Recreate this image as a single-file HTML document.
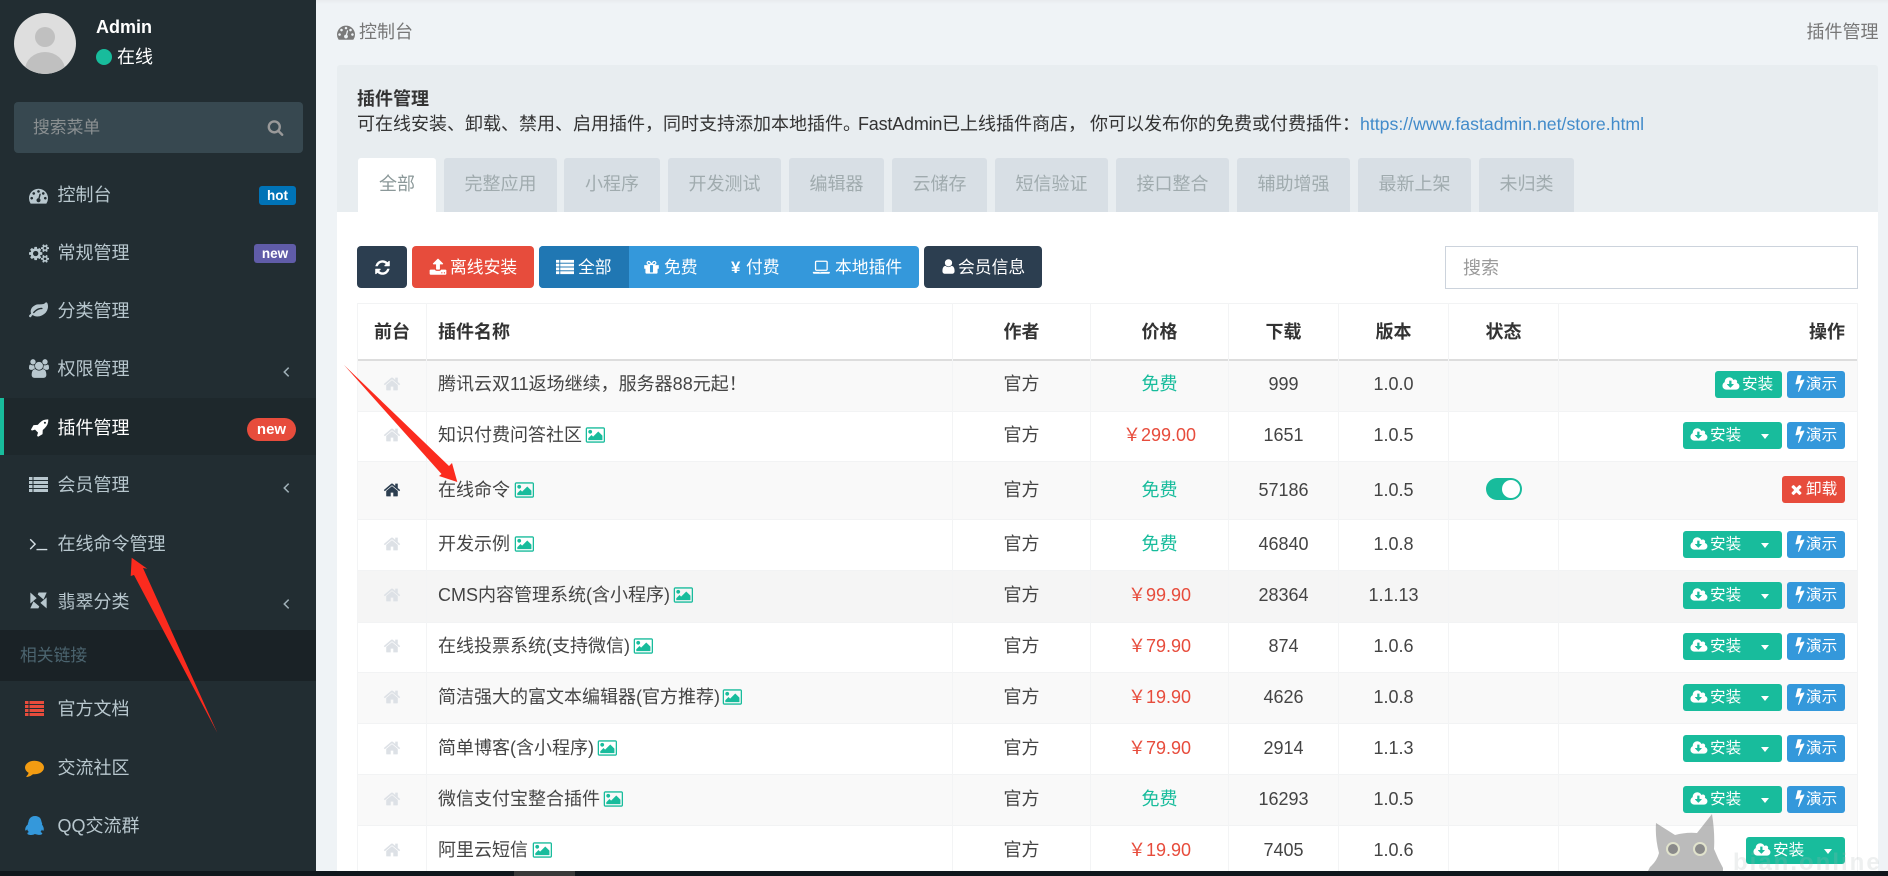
<!DOCTYPE html>
<html lang="zh"><head><meta charset="utf-8"><title>插件管理</title>
<style>
html,body{margin:0;padding:0;width:1888px;height:876px;overflow:hidden;background:#eff3f6}
body{position:relative;font-family:"Liberation Sans","Noto Sans CJK SC",sans-serif;font-size:18px;color:#444}
div,span,svg,a{position:absolute;box-sizing:border-box}
.t{white-space:nowrap;line-height:24px;height:24px}
svg{fill:currentColor;overflow:visible}
#side{left:0;top:0;width:316px;height:871px;background:#222d32}
.m{left:57.5px;color:#b8c7ce}
.ic{color:#b8c7ce}
.bd{color:#fff;font-weight:bold;text-align:center;border-radius:3px;font-size:13.5px;line-height:19px;height:19px}
.tab{top:158px;height:54px;background:#d8dfe5;border-radius:3px 3px 0 0;text-align:center;line-height:52px;color:#a0abae}
.tb{top:246px;height:42px;border-radius:4px}
.w{color:#fff;font-size:16.8px;top:256px}
.rb{left:357px;width:1501px;border-bottom:1px solid #f2f3f4}
.vl{top:303px;width:1px;height:568px;background:#f3f4f5}
.h{left:383px;top:3px;width:18px;height:18px;color:#dde1e6}
.a,.p,.d,.v{text-align:center}
.a{left:953px;width:137px}.p{left:1091px;width:137px;color:#e74c3c}.f{color:#18bc9c}.d{left:1229px;width:109px}.v{left:1339px;width:109px}
.n{left:438px}
.im{width:20px;height:18px;color:#18bc9c}
.btn{height:27px;border-radius:3px;color:#fff}
.g{background:#18bc9c}.bl{background:#3498db}
.l{font-size:15.6px;line-height:28px;white-space:nowrap}
.cd{width:17px;height:16px;top:5px;color:#fff}
.bt{width:10px;height:16px;top:5px;color:#fff}
.ca{width:0;height:0;border-left:4.5px solid transparent;border-right:4.5px solid transparent;border-top:5px solid #fff;top:12px}
</style></head><body>
<svg width="0" height="0" style="left:0;top:0"><defs>
<path id="home" d="M1472 992v480q0 26-19 45t-45 19h-384v-384h-256v384h-384q-26 0-45-19t-19-45v-480q0-1 .5-3t.5-3l575-474 575 474q1 2 1 6zm223-69l-62 74q-8 9-21 11h-3q-13 0-21-7l-692-577-692 577q-12 8-24 7-13-2-21-11l-62-74q-8-10-7-23.500t11-21.500l719-599q32-26 76-26t76 26l244 204v-195q0-14 9-23t23-9h192q14 0 23 9t9 23v408l219 182q10 8 11 21.500t-7 23.500z"/>
<path id="dash" d="M384 1152q0-53-37.500-90.500t-90.500-37.500-90.500 37.500-37.500 90.500 37.500 90.500 90.500 37.500 90.500-37.500 37.500-90.500zm192-448q0-53-37.500-90.500t-90.500-37.500-90.500 37.500-37.500 90.500 37.500 90.500 90.500 37.500 90.500-37.500 37.500-90.500zm428 481l101-382q6-26-7.500-48.500t-38.500-29.500-48 6.500-30 39.500l-101 382q-60 5-107 43.500t-63 98.500q-20 77 20 146t117 89 146-20 89-117q16-60-6-117t-72-91zm660-33q0-53-37.500-90.500t-90.500-37.500-90.500 37.500-37.500 90.500 37.500 90.500 90.500 37.500 90.500-37.500 37.500-90.500zm-640-640q0-53-37.500-90.500t-90.500-37.500-90.500 37.500-37.500 90.500 37.500 90.500 90.500 37.500 90.500-37.500 37.500-90.500zm448 192q0-53-37.500-90.500t-90.500-37.500-90.500 37.500-37.500 90.500 37.500 90.500 90.500 37.500 90.500-37.500 37.500-90.500zm320 448q0 261-141 483-19 29-54 29h-1402q-35 0-54-29-141-221-141-483 0-182 71-348t191-286 286-191 348-71 348 71 286 191 191 286 71 348z"/>
<path id="search" d="M1216 832q0-185-131.500-316.500t-316.500-131.500-316.500 131.500-131.500 316.500 131.500 316.500 316.500 131.500 316.500-131.500 131.500-316.500zm512 832q0 52-38 90t-90 38q-54 0-90-38l-343-342q-179 124-399 124-143 0-273.500-55.500t-225-150-150-225-55.500-273.500 55.500-273.500 150-225 225-150 273.500-55.500 273.500 55.500 225 150 150 225 55.500 273.500q0 220-124 399l343 343q37 37 37 90z"/>
<path id="rocket" d="M1504 448q0-40-28-68t-68-28-68 28-28 68 28 68 68 28 68-28 28-68zm224-288q0 249-75.500 430.500t-253.500 360.500q-81 80-195 176l-20 379q-2 16-16 26l-384 224q-7 4-16 4-12 0-23-9l-64-64q-13-14-8-32l85-276-281-281-276 85q-3 1-9 1-14 0-23-9l-64-64q-17-19-5-39l224-384q10-14 26-16l379-20q96-114 176-195 188-187 358-258t431-71q14 0 24 9.500t10 22.500z"/>
<path id="cloud" d="M1216 928q0-14-9-23t-23-9h-224v-352q0-13-9.500-22.500t-22.500-9.500h-192q-13 0-22.500 9.500t-9.500 22.500v352h-224q-13 0-22.500 9.500t-9.500 22.500q0 14 9 23l352 352q9 9 23 9t23-9l351-351q10-12 10-24zm640 224q0 159-112.500 271.500t-271.500 112.500h-1088q-185 0-316.500-131.500t-131.500-316.500q0-130 70-240t188-165q-2-30-2-43 0-212 150-362t362-150q156 0 285.500 87t188.500 231q71-62 166-62 106 0 181 75t75 181q0 76-41 138 130 31 213.500 135.500t83.500 238.500z"/>
<path id="bolt" d="M1333 566q18 20 7 44l-540 1157q-13 25-42 25-4 0-14-2-17-5-25.500-19t-4.500-30l197-808-406 101q-4 1-12 1-18 0-31-11-18-15-13-39l201-825q4-14 16-23t28-9h328q19 0 32 12.500t13 29.500q0 8-5 18l-171 463 396-98q8-2 12-2 19 0 34 15z"/>
<path id="times" d="M1490 1322q0 40-28 68l-136 136q-28 28-68 28t-68-28l-294-294-294 294q-28 28-68 28t-68-28l-136-136q-28-28-28-68t28-68l294-294-294-294q-28-28-28-68t28-68l136-136q28-28 68-28t68 28l294 294 294-294q28-28 68-28t68 28l136 136q28 28 28 68t-28 68l-294 294 294 294q28 28 28 68z"/>
<path id="img" d="M576 576q0 80-56 136t-136 56-136-56-56-136 56-136 136-56 136 56 56 136zm1024 384v448h-1408v-192l320-320 160 160 512-512zm96-704h-1600q-13 0-22.500 9.500t-9.500 22.500v1216q0 13 9.500 22.500t22.500 9.500h1600q13 0 22.500-9.500t9.500-22.500v-1216q0-13-9.500-22.500t-22.500-9.500zm160 32v1216q0 66-47 113t-113 47h-1600q-66 0-113-47t-47-113v-1216q0-66 47-113t113-47h1600q66 0 113 47t47 113z"/>
<path id="refresh" d="M1639 1056q0 5-1 7-64 268-268 434.500t-478 166.500q-146 0-282.500-55t-243.500-157l-129 129q-19 19-45 19t-45-19-19-45v-448q0-26 19-45t45-19h448q26 0 45 19t19 45-19 45l-137 137q71 66 161 102t187 36q134 0 250-65t186-179q11-17 53-117 8-23 30-23h192q13 0 22.500 9.500t9.500 22.500zm25-800v448q0 26-19 45t-45 19h-448q-26 0-45-19t-19-45 19-45l138-138q-148-137-349-137-134 0-250 65t-186 179q-11 17-53 117-8 23-30 23h-199q-13 0-22.500-9.500t-9.500-22.500v-7q65-268 270-434.500t480-166.500q146 0 284 55.500t245 156.500l130-129q19-19 45-19t45 19 19 45z"/>
<path id="upload" d="M1344 1472q0-26-19-45t-45-19-45 19-19 45 19 45 45 19 45-19 19-45zm256 0q0-26-19-45t-45-19-45 19-19 45 19 45 45 19 45-19 19-45zm128-224v320q0 40-28 68t-68 28h-1472q-40 0-68-28t-28-68v-320q0-40 28-68t68-28h427q21 56 70.500 92t110.500 36h256q61 0 110.500-36t70.500-92h427q40 0 68 28t28 68zm-325-648q-17 40-59 40h-256v448q0 26-19 45t-45 19h-256q-26 0-45-19t-19-45v-448h-256q-42 0-59-40-17-39 14-69l448-448q18-19 45-19t45 19l448 448q31 30 14 69z"/>
<path id="gift" d="M1056 1356v-716h-320v716q0 25 18 38.500t46 13.500h192q28 0 46-13.500t18-38.500zm-456-844h195l-126-161q-26-31-69-31-40 0-68 28t-28 68 28 68 68 28zm688-96q0-40-28-68t-68-28q-43 0-69 31l-125 161h194q40 0 68-28t28-68zm376 256v320q0 14-9 23t-23 9h-96v416q0 40-28 68t-68 28h-1088q-40 0-68-28t-28-68v-416h-96q-14 0-23-9t-9-23v-320q0-14 9-23t23-9h440q-93 0-158.500-65.500t-65.500-158.500 65.500-158.500 158.500-65.500q107 0 168 77l128 165 128-165q61-77 168-77 93 0 158.500 65.500t65.500 158.500-65.500 158.500-158.500 65.500h440q14 0 23 9t9 23z"/>
<path id="laptop" d="M416 1280q-66 0-113-47t-47-113v-704q0-66 47-113t113-47h960q66 0 113 47t47 113v704q0 66-47 113t-113 47h-960zm-32-864v704q0 13 9.500 22.500t22.500 9.500h960q13 0 22.500-9.500t9.500-22.500v-704q0-13-9.500-22.500t-22.500-9.500h-960q-13 0-22.500 9.500t-9.500 22.500zm1200 960h160v96q0 40-47 68t-113 28h-1376q-66 0-113-28t-47-68v-96h1536zm-720 96q16 0 16-16t-16-16h-160q-16 0-16 16t16 16h160z"/>
<path id="user" d="M1536 1399q0 109-62.500 187t-150.500 78h-854q-88 0-150.500-78t-62.500-187q0-85 8.500-160.500t31.500-152 58.500-131 94-89 134.500-34.500q131 128 313 128t313-128q76 0 134.500 34.500t94 89 58.500 131 31.500 152 8.500 160.500zm-256-887q0 159-112.500 271.500t-271.500 112.500-271.500-112.500-112.500-271.500 112.500-271.500 271.500-112.500 271.500 112.500 112.500 271.500z"/>
<path id="users" d="M593 896q-162 5-265 128h-134q-82 0-138-40.500t-56-118.500q0-353 124-353 6 0 43.500 21t97.500 42.500 119 21.500q67 0 133-23-5 37-5 66 0 139 81 256zm1071 637q0 120-73 189.500t-194 69.500h-874q-121 0-194-69.500t-73-189.500q0-53 3.500-103.500t14-109 26.500-108.500 43-97.500 62-81 85.500-53.500 111.500-20q10 0 43 21.500t73 48 107 48 135 21.500 135-21.500 107-48 73-48 43-21.500q61 0 111.500 20t85.500 53.500 62 81 43 97.500 26.500 108.500 14 109 3.500 103.500zm-1024-1277q0 106-75 181t-181 75-181-75-75-181 75-181 181-75 181 75 75 181zm704 384q0 159-112.500 271.500t-271.500 112.500-271.500-112.500-112.500-271.500 112.500-271.500 271.500-112.500 271.500 112.500 112.500 271.500zm576 225q0 78-56 118.500t-138 40.500h-134q-103-123-265-128 81-117 81-256 0-29-5-66 66 23 133 23 59 0 119-21.500t97.500-42.500 43.500-21q124 0 124 353zm-128-609q0 106-75 181t-181 75-181-75-75-181 75-181 181-75 181 75 75 181z"/>
<path id="cogs" d="M896 896q0-106-75-181t-181-75-181 75-75 181 75 181 181 75 181-75 75-181zm768 512q0-52-38-90t-90-38-90 38-38 90q0 53 37.500 90.500t90.500 37.500 90.500-37.500 37.500-90.500zm0-1024q0-52-38-90t-90-38-90 38-38 90q0 53 37.500 90.500t90.500 37.500 90.500-37.500 37.500-90.500zm-384 421v185q0 10-7 19.500t-16 10.500l-155 24q-11 35-32 76 34 48 90 115 7 11 7 20 0 12-7 19-23 30-82.500 89.500t-78.500 59.500q-11 0-21-7l-115-90q-37 19-77 31-11 108-23 155-7 24-30 24h-186q-11 0-20-7.500t-10-17.500l-23-153q-34-10-75-31l-118 89q-7 7-20 7-11 0-21-8-144-133-144-160 0-9 7-19 10-14 41-53t47-61q-23-44-35-82l-152-24q-10-1-17-9.500t-7-19.500v-185q0-10 7-19.500t16-10.500l155-24q11-35 32-76-34-48-90-115-7-11-7-20 0-12 7-20 22-30 82-89t79-59q11 0 21 7l115 90q34-18 77-32 11-108 23-154 7-24 30-24h186q11 0 20 7.500t10 17.500l23 153q34 10 75 31l118-89q8-7 20-7 11 0 21 8 144 133 144 160 0 8-7 19-12 16-42 54t-45 60q23 48 34 82l152 23q10 2 17 10.500t7 19.500zm640 533v140q0 16-149 31-12 27-30 52 51 113 51 138 0 4-4 7-122 71-124 71-8 0-46-47t-52-68q-20 2-30 2t-30-2q-14 21-52 68t-46 47q-2 0-124-71-4-3-4-7 0-25 51-138-18-25-30-52-149-15-149-31v-140q0-16 149-31 13-29 30-52-51-113-51-138 0-4 4-7 4-2 35-20t59-34 30-16q8 0 46 46.500t52 67.500q20-2 30-2t30 2q51-71 92-112l6-2q4 0 124 70 4 3 4 7 0 25-51 138 17 23 30 52 149 15 149 31zm0-1024v140q0 16-149 31-12 27-30 52 51 113 51 138 0 4-4 7-122 71-124 71-8 0-46-47t-52-68q-20 2-30 2t-30-2q-14 21-52 68t-46 47q-2 0-124-71-4-3-4-7 0-25 51-138-18-25-30-52-149-15-149-31v-140q0-16 149-31 13-29 30-52-51-113-51-138 0-4 4-7 4-2 35-20t59-34 30-16q8 0 46 46.500t52 67.500q20-2 30-2t30 2q51-71 92-112l6-2q4 0 124 70 4 3 4 7 0 25-51 138 17 23 30 52 149 15 149 31z"/>
<path id="leaf" d="M1280 704q0-26-19-45t-45-19q-172 0-318 49.500t-259.500 134-235.500 219.500q-19 21-19 45 0 26 19 45t45 19q24 0 45-19 27-24 74-71t67-66q137-124 268.500-176t313.500-52q26 0 45-19t19-45zm512-198q0 95-20 193-46 224-184.500 383t-357.500 268q-214 108-438 108-148 0-286-47-15-5-88-42t-96-37q-16 0-39.500 32t-45 70-52.500 70-60 32q-30 0-51-11t-31-24-27-42q-2-4-6-11t-5.500-10-3-9.500-1.500-13.500q0-35 31-73.500t68-65.500 68-56 31-48q0-4-14-38t-16-44q-9-51-9-104 0-115 43.500-220t119-184.500 170.500-139 204-95.500q55-18 145-25.500t179.500-9 178.500-6 163.500-24 113.500-56.500l29.500-29.500 29.500-28 27-20 36.500-16 43.500-4.500q39 0 70.500 46t47.500 112 24 124 8 96z"/>
<path id="term" d="M649 983l-466 466q-10 10-23 10t-23-10l-50-50q-10-10-10-23t10-23l393-393-393-393q-10-10-10-23t10-23l50-50q10-10 23-10t23 10l466 466q10 10 10 23t-10 23zm1079 457v64q0 14-9 23t-23 9h-960q-14 0-23-9t-9-23v-64q0-14 9-23t23-9h960q14 0 23 9t9 23z"/>
<path id="comment" d="M1792 896q0 174-120 321.500t-326 233-450 85.500q-70 0-145-8-198 175-460 242-49 14-114 22-17 2-30.500-9t-17.500-29v-1q-3-4-.500-12t2-10 4.500-9.500l6-9 7-8.500 8-9q7-8 31-34.500t34.500-38 31-39.500 32.500-51 27-59 26-76q-157-89-247.500-220t-90.500-281q0-130 71-248.500t191-204.500 286-136.500 348-50.500q244 0 450 85.500t326 233 120 321.500z"/>
<path id="qq" d="M270 806q-8-19-8-52 0-20 11-49t24-45q-1-22 7.500-53t22.500-43q0-139 92.500-288.500t217.500-209.500q139-66 324-66 133 0 266 55 49 21 90 48t71 56 55 68 42 74 32.500 84.500 25.500 89.500 22 98l1 5q55 83 55 150 0 14-9 40t-9 38q0 1 1.500 3.500t3.500 5 2 3.500q77 114 120.500 214.500t43.500 208.500q0 43-19.500 100t-55.500 57q-9 0-19.500-7.500t-19-17.500-19-26-16-26.500-13.500-26-9-17.500q-1-1-3-1l-5 4q-59 154-132 223 20 20 61.500 38.500t69 41.500 35.500 65q-2 4-4 16t-7 18q-64 97-302 97-53 0-110.500-9t-98-20-104.500-30q-15-5-23-7-14-4-46-4.500t-40-1.500q-41 45-127.500 65t-168.500 20q-35 0-69-1.500t-93-9-101-20.500-74.500-40-32.500-64q0-40 10-59.500t41-48.500q11-2 40.500-13t49.500-12q4 0 14-2 2-2 2-4l-2-3q-48-11-108-105.500t-73-156.500l-5-3q-4 0-12 20-18 41-54.500 74.500t-77.500 37.500h-1q-4 0-6-4.500t-5-5.500q-23-54-23-100 0-275 252-466z"/>
<g id="list"><rect x="0" y="2" width="3.500" height="3"/><rect x="4.500" y="2" width="14.500" height="3"/><rect x="0" y="6" width="3.500" height="3"/><rect x="4.500" y="6" width="14.500" height="3"/><rect x="0" y="10" width="3.500" height="3"/><rect x="4.500" y="10" width="14.500" height="3"/><rect x="0" y="14" width="3.500" height="3"/><rect x="4.500" y="14" width="14.500" height="3"/></g>
</defs></svg>

<!-- main panel -->
<div style="left:316px;top:0;width:1572px;height:4px;background:linear-gradient(#e8ebee,#eff3f6)"></div>
<svg viewBox="0 0 1792 1792" style="left:337px;top:23px;width:18px;height:18px;color:#7a7a7a"><use href="#dash"/></svg>
<div class="t" style="left:359px;top:20px;color:#777">控制台</div>
<div class="t" style="left:1806.5px;top:20px;color:#777">插件管理</div>

<div style="left:337px;top:65px;width:1541px;height:147px;background:#e8edf0;border-radius:3px 3px 0 0"></div>
<div class="t" style="left:357px;top:87px;font-weight:bold;color:#333">插件管理</div>
<div class="t" style="left:357px;top:112px;color:#333">可在线安装、卸载、禁用、启用插件，同时支持添加本地插件。</div>
<div class="t" style="left:858px;top:112px;color:#333;letter-spacing:-.2px">FastAdmin</div>
<div class="t" style="left:942px;top:112px;color:#333">已上线插件商店，</div>
<div class="t" style="left:1090px;top:112px;color:#333">你可以发布你的免费或付费插件：</div>
<div class="t" style="left:1360px;top:112px;color:#428bca;font-size:17.7px">https://www.fastadmin.net/store.html</div>

<div class="tab" style="left:358px;width:78px;background:#fff;color:#8b9899">全部</div>
<div class="tab" style="left:444px;width:113px">完整应用</div>
<div class="tab" style="left:564px;width:96px">小程序</div>
<div class="tab" style="left:668px;width:113px">开发测试</div>
<div class="tab" style="left:789px;width:95px">编辑器</div>
<div class="tab" style="left:892px;width:95px">云储存</div>
<div class="tab" style="left:995px;width:113px">短信验证</div>
<div class="tab" style="left:1116px;width:113px">接口整合</div>
<div class="tab" style="left:1237px;width:113px">辅助增强</div>
<div class="tab" style="left:1358px;width:113px">最新上架</div>
<div class="tab" style="left:1479px;width:95px">未归类</div>

<div style="left:337px;top:212px;width:1541px;height:659px;background:#fff"></div>

<!-- toolbar -->
<div class="tb" style="left:357px;width:50px;background:#2c3e50"></div>
<svg viewBox="0 0 1792 1792" style="left:374px;top:258.5px;width:17px;height:17px;color:#fff"><use href="#refresh"/></svg>
<div class="tb" style="left:412px;width:122px;background:#e74c3c"></div>
<svg viewBox="0 0 1792 1792" style="left:429px;top:258px;width:18px;height:18px;color:#fff"><use href="#upload"/></svg>
<div class="t w" style="left:450px">离线安装</div>
<div class="tb" style="left:539px;width:380px;background:#3498db"></div>
<div class="tb" style="left:539px;width:90px;background:#2077b3;border-radius:4px 0 0 4px"></div>
<svg viewBox="0 0 19 19" style="left:556px;top:258px;width:18px;height:18px;color:#fff"><use href="#list"/></svg>
<div class="t w" style="left:578px">全部</div>
<svg viewBox="0 0 1792 1792" style="left:643px;top:259px;width:17px;height:17px;color:#fff"><use href="#gift"/></svg>
<div class="t w" style="left:664px">免费</div>
<div class="t w" style="left:731px;font-weight:bold">¥</div>
<div class="t w" style="left:746px">付费</div>
<svg viewBox="0 0 1920 1792" style="left:812px;top:258px;width:20px;height:18px;color:#fff"><use href="#laptop"/></svg>
<div class="t w" style="left:835px">本地插件</div>
<div class="tb" style="left:924px;width:118px;background:#2c3e50"></div>
<svg viewBox="0 0 1792 1792" style="left:940px;top:258px;width:17px;height:17px;color:#fff"><use href="#user"/></svg>
<div class="t w" style="left:958px">会员信息</div>
<div style="left:1445px;top:246px;width:413px;height:43px;border:1px solid #ccd3dc;background:#fff"></div>
<div class="t" style="left:1463px;top:256px;color:#9a9a9a">搜索</div>

<!-- table backgrounds -->
<div class="rb" style="top:303px;height:58px;background:#fff;border-top:1px solid #f2f3f4;border-bottom:2px solid #ddd"></div>
<div class="rb" style="top:361px;height:51px;background:#f9f9f9"></div>
<div class="rb" style="top:412px;height:50px;background:#fff"></div>
<div class="rb" style="top:462px;height:58px;background:#f9f9f9"></div>
<div class="rb" style="top:520px;height:51px;background:#fff"></div>
<div class="rb" style="top:571px;height:52px;background:#f5f5f5"></div>
<div class="rb" style="top:623px;height:50px;background:#fff"></div>
<div class="rb" style="top:673px;height:51px;background:#f9f9f9"></div>
<div class="rb" style="top:724px;height:51px;background:#fff"></div>
<div class="rb" style="top:775px;height:51px;background:#f9f9f9"></div>
<div class="rb" style="top:826px;height:45px;background:#fff;border-bottom:0"></div>
<div class="vl" style="left:357px"></div><div class="vl" style="left:426px"></div><div class="vl" style="left:952px"></div><div class="vl" style="left:1090px"></div><div class="vl" style="left:1228px"></div><div class="vl" style="left:1338px"></div><div class="vl" style="left:1448px"></div><div class="vl" style="left:1558px"></div><div class="vl" style="left:1857px"></div>

<!-- header -->
<div class="t" style="left:357.5px;width:69px;top:320px;text-align:center;font-weight:bold;color:#333">前台</div>
<div class="t n" style="top:320px;font-weight:bold;color:#333">插件名称</div>
<div class="t a" style="top:320px;font-weight:bold;color:#333">作者</div>
<div class="t" style="left:1091px;width:137px;top:320px;text-align:center;font-weight:bold;color:#333">价格</div>
<div class="t d" style="top:320px;font-weight:bold;color:#333">下载</div>
<div class="t v" style="top:320px;font-weight:bold;color:#333">版本</div>
<div class="t" style="left:1449px;width:109px;text-align:center;top:320px;font-weight:bold;color:#333">状态</div>
<div class="t" style="left:1809px;top:320px;font-weight:bold;color:#333">操作</div>

<!-- rows -->
<div style="left:0;top:372px"><svg class="h" viewBox="0 0 1792 1792"><use href="#home"/></svg><div class="t n">腾讯云双11返场继续，服务器88元起！</div><div class="t a">官方</div><div class="t p f">免费</div><div class="t d">999</div><div class="t v">1.0.0</div></div>
<div style="left:0;top:423px"><svg class="h" viewBox="0 0 1792 1792"><use href="#home"/></svg><div class="t n">知识付费问答社区</div><svg class="im" viewBox="0 0 1920 1792" style="left:586px;top:3px"><use href="#img"/></svg><div class="t a">官方</div><div class="t p">￥299.00</div><div class="t d">1651</div><div class="t v">1.0.5</div></div>
<div style="left:0;top:478px"><svg class="h" viewBox="0 0 1792 1792" style="color:#2c3e50"><use href="#home"/></svg><div class="t n">在线命令</div><svg class="im" viewBox="0 0 1920 1792" style="left:515px;top:3px"><use href="#img"/></svg><div class="t a">官方</div><div class="t p f">免费</div><div class="t d">57186</div><div class="t v">1.0.5</div></div>
<div style="left:0;top:532px"><svg class="h" viewBox="0 0 1792 1792"><use href="#home"/></svg><div class="t n">开发示例</div><svg class="im" viewBox="0 0 1920 1792" style="left:515px;top:3px"><use href="#img"/></svg><div class="t a">官方</div><div class="t p f">免费</div><div class="t d">46840</div><div class="t v">1.0.8</div></div>
<div style="left:0;top:583px"><svg class="h" viewBox="0 0 1792 1792"><use href="#home"/></svg><div class="t n">CMS内容管理系统(含小程序)</div><svg class="im" viewBox="0 0 1920 1792" style="left:674px;top:3px"><use href="#img"/></svg><div class="t a">官方</div><div class="t p">￥99.90</div><div class="t d">28364</div><div class="t v">1.1.13</div></div>
<div style="left:0;top:634px"><svg class="h" viewBox="0 0 1792 1792"><use href="#home"/></svg><div class="t n">在线投票系统(支持微信)</div><svg class="im" viewBox="0 0 1920 1792" style="left:634px;top:3px"><use href="#img"/></svg><div class="t a">官方</div><div class="t p">￥79.90</div><div class="t d">874</div><div class="t v">1.0.6</div></div>
<div style="left:0;top:685px"><svg class="h" viewBox="0 0 1792 1792"><use href="#home"/></svg><div class="t n">简洁强大的富文本编辑器(官方推荐)</div><svg class="im" viewBox="0 0 1920 1792" style="left:723px;top:3px"><use href="#img"/></svg><div class="t a">官方</div><div class="t p">￥19.90</div><div class="t d">4626</div><div class="t v">1.0.8</div></div>
<div style="left:0;top:736px"><svg class="h" viewBox="0 0 1792 1792"><use href="#home"/></svg><div class="t n">简单博客(含小程序)</div><svg class="im" viewBox="0 0 1920 1792" style="left:598px;top:3px"><use href="#img"/></svg><div class="t a">官方</div><div class="t p">￥79.90</div><div class="t d">2914</div><div class="t v">1.1.3</div></div>
<div style="left:0;top:787px"><svg class="h" viewBox="0 0 1792 1792"><use href="#home"/></svg><div class="t n">微信支付宝整合插件</div><svg class="im" viewBox="0 0 1920 1792" style="left:604px;top:3px"><use href="#img"/></svg><div class="t a">官方</div><div class="t p f">免费</div><div class="t d">16293</div><div class="t v">1.0.5</div></div>
<div style="left:0;top:838px"><svg class="h" viewBox="0 0 1792 1792"><use href="#home"/></svg><div class="t n">阿里云短信</div><svg class="im" viewBox="0 0 1920 1792" style="left:533px;top:3px"><use href="#img"/></svg><div class="t a">官方</div><div class="t p">￥19.90</div><div class="t d">7405</div><div class="t v">1.0.6</div></div>

<!-- buttons -->
<div class="btn g" style="left:1715px;top:371px;width:67px"><svg class="cd" viewBox="0 0 1920 1792" style="left:8px"><use href="#cloud"/></svg><span class="l" style="left:27px">安装</span></div>
<div class="btn bl" style="left:1787px;top:371px;width:58px"><svg class="bt" viewBox="400 200 1000 1600" style="left:8px"><use href="#bolt"/></svg><span class="l" style="left:19px">演示</span></div>

<div class="btn g" style="left:1683px;top:422px;width:99px"><svg class="cd" viewBox="0 0 1920 1792" style="left:8px"><use href="#cloud"/></svg><span class="l" style="left:27px">安装</span><span class="ca" style="left:78px"></span></div>
<div class="btn bl" style="left:1787px;top:422px;width:58px"><svg class="bt" viewBox="400 200 1000 1600" style="left:8px"><use href="#bolt"/></svg><span class="l" style="left:19px">演示</span></div>

<div style="left:1486px;top:478px;width:36px;height:22px;border-radius:11px;background:#18bc9c"></div>
<div style="left:1502px;top:480px;width:18px;height:18px;border-radius:50%;background:#fff"></div>
<div class="btn" style="left:1782px;top:476px;width:63px;background:#e74c3c"><svg viewBox="0 0 1792 1792" style="left:7px;top:6px;width:15px;height:15px;color:#fff"><use href="#times"/></svg><span class="l" style="left:24px">卸载</span></div>

<div class="btn g" style="left:1683px;top:531px;width:99px"><svg class="cd" viewBox="0 0 1920 1792" style="left:8px"><use href="#cloud"/></svg><span class="l" style="left:27px">安装</span><span class="ca" style="left:78px"></span></div>
<div class="btn bl" style="left:1787px;top:531px;width:58px"><svg class="bt" viewBox="400 200 1000 1600" style="left:8px"><use href="#bolt"/></svg><span class="l" style="left:19px">演示</span></div>

<div class="btn g" style="left:1683px;top:582px;width:99px"><svg class="cd" viewBox="0 0 1920 1792" style="left:8px"><use href="#cloud"/></svg><span class="l" style="left:27px">安装</span><span class="ca" style="left:78px"></span></div>
<div class="btn bl" style="left:1787px;top:582px;width:58px"><svg class="bt" viewBox="400 200 1000 1600" style="left:8px"><use href="#bolt"/></svg><span class="l" style="left:19px">演示</span></div>

<div class="btn g" style="left:1683px;top:633px;width:99px"><svg class="cd" viewBox="0 0 1920 1792" style="left:8px"><use href="#cloud"/></svg><span class="l" style="left:27px">安装</span><span class="ca" style="left:78px"></span></div>
<div class="btn bl" style="left:1787px;top:633px;width:58px"><svg class="bt" viewBox="400 200 1000 1600" style="left:8px"><use href="#bolt"/></svg><span class="l" style="left:19px">演示</span></div>

<div class="btn g" style="left:1683px;top:684px;width:99px"><svg class="cd" viewBox="0 0 1920 1792" style="left:8px"><use href="#cloud"/></svg><span class="l" style="left:27px">安装</span><span class="ca" style="left:78px"></span></div>
<div class="btn bl" style="left:1787px;top:684px;width:58px"><svg class="bt" viewBox="400 200 1000 1600" style="left:8px"><use href="#bolt"/></svg><span class="l" style="left:19px">演示</span></div>

<div class="btn g" style="left:1683px;top:735px;width:99px"><svg class="cd" viewBox="0 0 1920 1792" style="left:8px"><use href="#cloud"/></svg><span class="l" style="left:27px">安装</span><span class="ca" style="left:78px"></span></div>
<div class="btn bl" style="left:1787px;top:735px;width:58px"><svg class="bt" viewBox="400 200 1000 1600" style="left:8px"><use href="#bolt"/></svg><span class="l" style="left:19px">演示</span></div>

<div class="btn g" style="left:1683px;top:786px;width:99px"><svg class="cd" viewBox="0 0 1920 1792" style="left:8px"><use href="#cloud"/></svg><span class="l" style="left:27px">安装</span><span class="ca" style="left:78px"></span></div>
<div class="btn bl" style="left:1787px;top:786px;width:58px"><svg class="bt" viewBox="400 200 1000 1600" style="left:8px"><use href="#bolt"/></svg><span class="l" style="left:19px">演示</span></div>

<div class="btn g" style="left:1746px;top:837px;width:99px"><svg class="cd" viewBox="0 0 1920 1792" style="left:8px"><use href="#cloud"/></svg><span class="l" style="left:27px">安装</span><span class="ca" style="left:78px"></span></div>

<!-- cat watermark -->
<svg viewBox="0 0 75 58" style="left:1648px;top:813px;width:75px;height:58px">
<path d="M8 10L27 22Q38 19 49 20L64 1Q67 20 66 36Q70 46 75 55L75 58L0 58L2 54Q9 48 11 40Q7 25 8 10Z" fill="#777" opacity=".5"/>
<circle cx="25" cy="36" r="7" fill="#e6e9cf" opacity=".85"/><circle cx="25" cy="36" r="5" fill="#8a8a8a"/>
<circle cx="52" cy="36" r="7" fill="#e6e9cf" opacity=".85"/><circle cx="52" cy="36" r="5" fill="#8a8a8a"/>
</svg>
<div class="t" style="left:1733px;top:851px;font-size:24px;font-weight:bold;color:rgba(170,180,180,.2);letter-spacing:2px">bian.online</div>

<!-- sidebar -->
<div id="side"></div>
<div style="left:14px;top:13px;width:62px;height:61px;border-radius:50%;background:#dedede;overflow:hidden">
  <div style="left:21px;top:14px;width:20px;height:20px;border-radius:50%;background:#c0c0c0"></div>
  <div style="left:11px;top:39px;width:40px;height:36px;border-radius:50%;background:#c0c0c0"></div>
</div>
<div class="t" style="left:96px;top:15px;color:#fff;font-weight:bold">Admin</div>
<div style="left:96px;top:49px;width:16px;height:16px;border-radius:50%;background:#18bc9c"></div>
<div class="t" style="left:117px;top:45px;color:#fff">在线</div>
<div style="left:14px;top:102px;width:289px;height:51px;border-radius:4px;background:#374850"></div>
<div class="t" style="left:33px;top:116px;font-size:16.8px;color:#8b9092">搜索菜单</div>
<svg viewBox="0 0 1792 1792" style="left:267px;top:119px;width:17px;height:17px;color:#999"><use href="#search"/></svg>

<div style="left:0;top:398px;width:316px;height:57px;background:#1e282c"></div>
<div style="left:0;top:398px;width:4px;height:57px;background:#18bc9c"></div>
<div style="left:0;top:630px;width:316px;height:51px;background:#1a2226"></div>

<svg class="ic" viewBox="0 0 1792 1792" style="left:29px;top:186px;width:19px;height:19px"><use href="#dash"/></svg>
<div class="t m" style="top:183px">控制台</div>
<div class="bd" style="left:259px;top:186px;width:37px;background:#0073b7">hot</div>
<svg class="ic" viewBox="0 0 1920 1792" style="left:29px;top:244px;width:20px;height:19px"><use href="#cogs"/></svg>
<div class="t m" style="top:241px">常规管理</div>
<div class="bd" style="left:254px;top:244px;width:42px;background:#605ca8">new</div>
<svg class="ic" viewBox="0 0 1792 1792" style="left:29px;top:301px;width:19px;height:19px"><use href="#leaf"/></svg>
<div class="t m" style="top:299px">分类管理</div>
<svg class="ic" viewBox="0 0 1920 1792" style="left:29px;top:359px;width:20px;height:19px"><use href="#users"/></svg>
<div class="t m" style="top:357px">权限管理</div>
<svg viewBox="0 0 8 12" style="left:283px;top:366px;width:7px;height:12px;fill:none;stroke:#9fb0b8;stroke-width:1.800"><path d="M6.500 1L1.500 6L6.500 11"/></svg>
<svg viewBox="0 0 1792 1792" style="left:30px;top:418px;width:19px;height:19px;color:#fff"><use href="#rocket"/></svg>
<div class="t m" style="top:416px;color:#fff">插件管理</div>
<div class="bd" style="left:247px;top:418px;width:49px;height:23px;line-height:23px;border-radius:12px;background:#e74c3c;font-size:15px">new</div>
<svg class="ic" viewBox="0 0 19 19" style="left:29px;top:475px;width:19px;height:19px"><use href="#list"/></svg>
<div class="t m" style="top:473px">会员管理</div>
<svg viewBox="0 0 8 12" style="left:283px;top:482px;width:7px;height:12px;fill:none;stroke:#9fb0b8;stroke-width:1.800"><path d="M6.500 1L1.500 6L6.500 11"/></svg>
<svg class="ic" viewBox="0 0 1792 1792" style="left:29px;top:534px;width:19px;height:19px;color:#d3dde2"><use href="#term"/></svg>
<div class="t m" style="top:532px">在线命令管理</div>
<svg class="ic" viewBox="0 250 1792 1300" preserveAspectRatio="none" style="left:30px;top:592px;width:17px;height:17px"><polygon points="1427,827 813,441 905,290 1760,290"/><polygon points="365,965 979,1351 887,1502 32,1502"/><polygon points="36,290 700,715 36,1130"/><polygon points="1756,1502 1092,1077 1756,662"/></svg>
<div class="t m" style="top:590px">翡翠分类</div>
<svg viewBox="0 0 8 12" style="left:283px;top:598px;width:7px;height:12px;fill:none;stroke:#9fb0b8;stroke-width:1.800"><path d="M6.500 1L1.500 6L6.500 11"/></svg>
<div class="t" style="left:20px;top:644px;font-size:16.8px;color:#4b646f">相关链接</div>
<svg viewBox="0 0 19 19" style="left:25px;top:699px;width:19px;height:19px;color:#e74c3c"><use href="#list"/></svg>
<div class="t m" style="top:697px">官方文档</div>
<svg viewBox="0 0 1792 1792" style="left:25px;top:758px;width:19px;height:19px;color:#f39c12"><use href="#comment"/></svg>
<div class="t m" style="top:756px">交流社区</div>
<svg viewBox="0 0 1792 1792" style="left:25px;top:816px;width:19px;height:19px;color:#3498db"><use href="#qq"/></svg>
<div class="t m" style="top:814px">QQ交流群</div>

<!-- bottom bar -->
<div style="left:0;top:871px;width:1888px;height:5px;background:#10171c"></div>
<div style="left:514px;top:871px;width:61px;height:5px;background:#3a3a3a"></div>

<!-- annotation arrows -->
<svg viewBox="0 0 1888 876" style="left:0;top:0;width:1888px;height:876px;fill:#fb2b1e;pointer-events:none">
<polygon points="344,365 449,466 452,463 457.300,482 439,476 441.500,474"/>
<polygon points="131.700,557.700 147.300,568.700 143,568 217.300,732.700 134,575 130.700,576"/>
</svg>
</body></html>
